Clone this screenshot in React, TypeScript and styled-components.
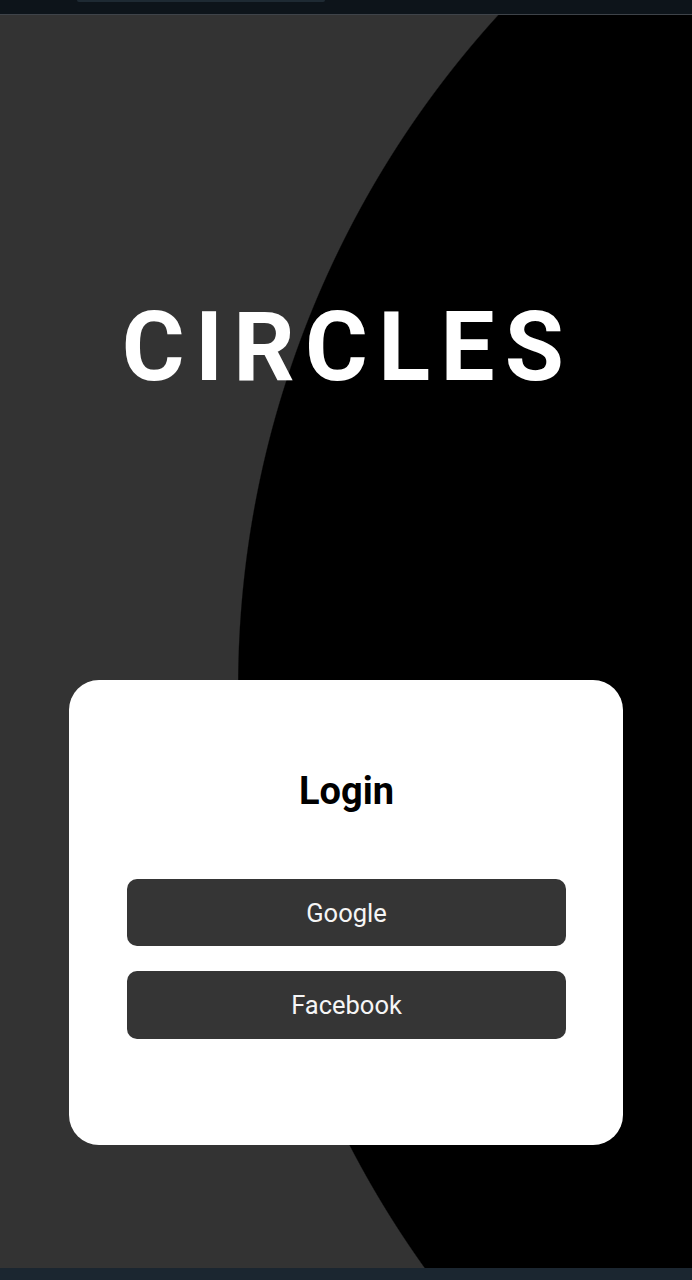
import React from "react";
import styled, { createGlobalStyle } from "styled-components";

const GlobalStyle = createGlobalStyle`
  html, body {
    margin: 0;
    padding: 0;
    background: #333333;
  }
  * { box-sizing: border-box; }
  body {
    font-family: Roboto, "Liberation Sans", Arial, sans-serif;
  }
`;

const Screen = styled.div`
  width: 692px;
  height: 1280px;
  display: flex;
  flex-direction: column;
  overflow: hidden;
`;

const StatusBar = styled.div`
  height: 15px;
  flex: none;
  background: #0d141a;
  border-bottom: 1px solid #3e4349;
  display: flex;
  align-items: flex-start;
`;

const Notch = styled.div`
  margin-left: 77px;
  width: 248px;
  height: 2px;
  border-radius: 0 0 2px 2px;
  background: #1e2a33;
`;

const Main = styled.main`
  flex: 1;
  display: flex;
  flex-direction: column;
  align-items: center;
  background-color: #333333;
  background-image: radial-gradient(
    circle 998px at 1236px 672px,
    #000000 997.3px,
    #333333 998.5px
  );
`;

const Title = styled.h1`
  margin: 284px 0 0;
  padding-left: 4px;
  font-family: Roboto, "Liberation Sans", Arial, sans-serif;
  font-weight: 700;
  font-size: 96px;
  line-height: 96px;
  letter-spacing: 10.3px;
  color: #ffffff;
`;

const Card = styled.section`
  margin-top: 285px;
  width: 554px;
  height: 465px;
  background: #ffffff;
  border-radius: 30px;
  padding: 92px 57px 0 58px;
  display: flex;
  flex-direction: column;
  align-items: stretch;
`;

const CardTitle = styled.h2`
  margin: 0 0 69px;
  text-align: center;
  font-family: Roboto, "Liberation Sans", Arial, sans-serif;
  font-weight: 700;
  font-size: 38px;
  line-height: 38px;
  color: #000000;
`;

const ButtonList = styled.div`
  display: flex;
  flex-direction: column;
  gap: 25px;
`;

const ProviderButton = styled.button<{ $h: number }>`
  height: ${(p) => p.$h}px;
  width: 100%;
  border: none;
  border-radius: 10px;
  background: #353535;
  color: #f5f5f5;
  font-family: Roboto, "Liberation Sans", Arial, sans-serif;
  font-weight: 400;
  font-size: 25.5px;
  cursor: pointer;
  display: flex;
  align-items: center;
  justify-content: center;
  padding: 0;
`;

const NavBar = styled.div`
  height: 12px;
  flex: none;
  background: #1b2630;
`;

export default function App() {
  return (
    <>
      <GlobalStyle />
      <Screen>
        <StatusBar>
          <Notch />
        </StatusBar>
        <Main>
          <Title>CIRCLES</Title>
          <Card>
            <CardTitle>Login</CardTitle>
            <ButtonList>
              <ProviderButton $h={67}>Google</ProviderButton>
              <ProviderButton $h={68}>Facebook</ProviderButton>
            </ButtonList>
          </Card>
        </Main>
        <NavBar />
      </Screen>
    </>
  );
}
